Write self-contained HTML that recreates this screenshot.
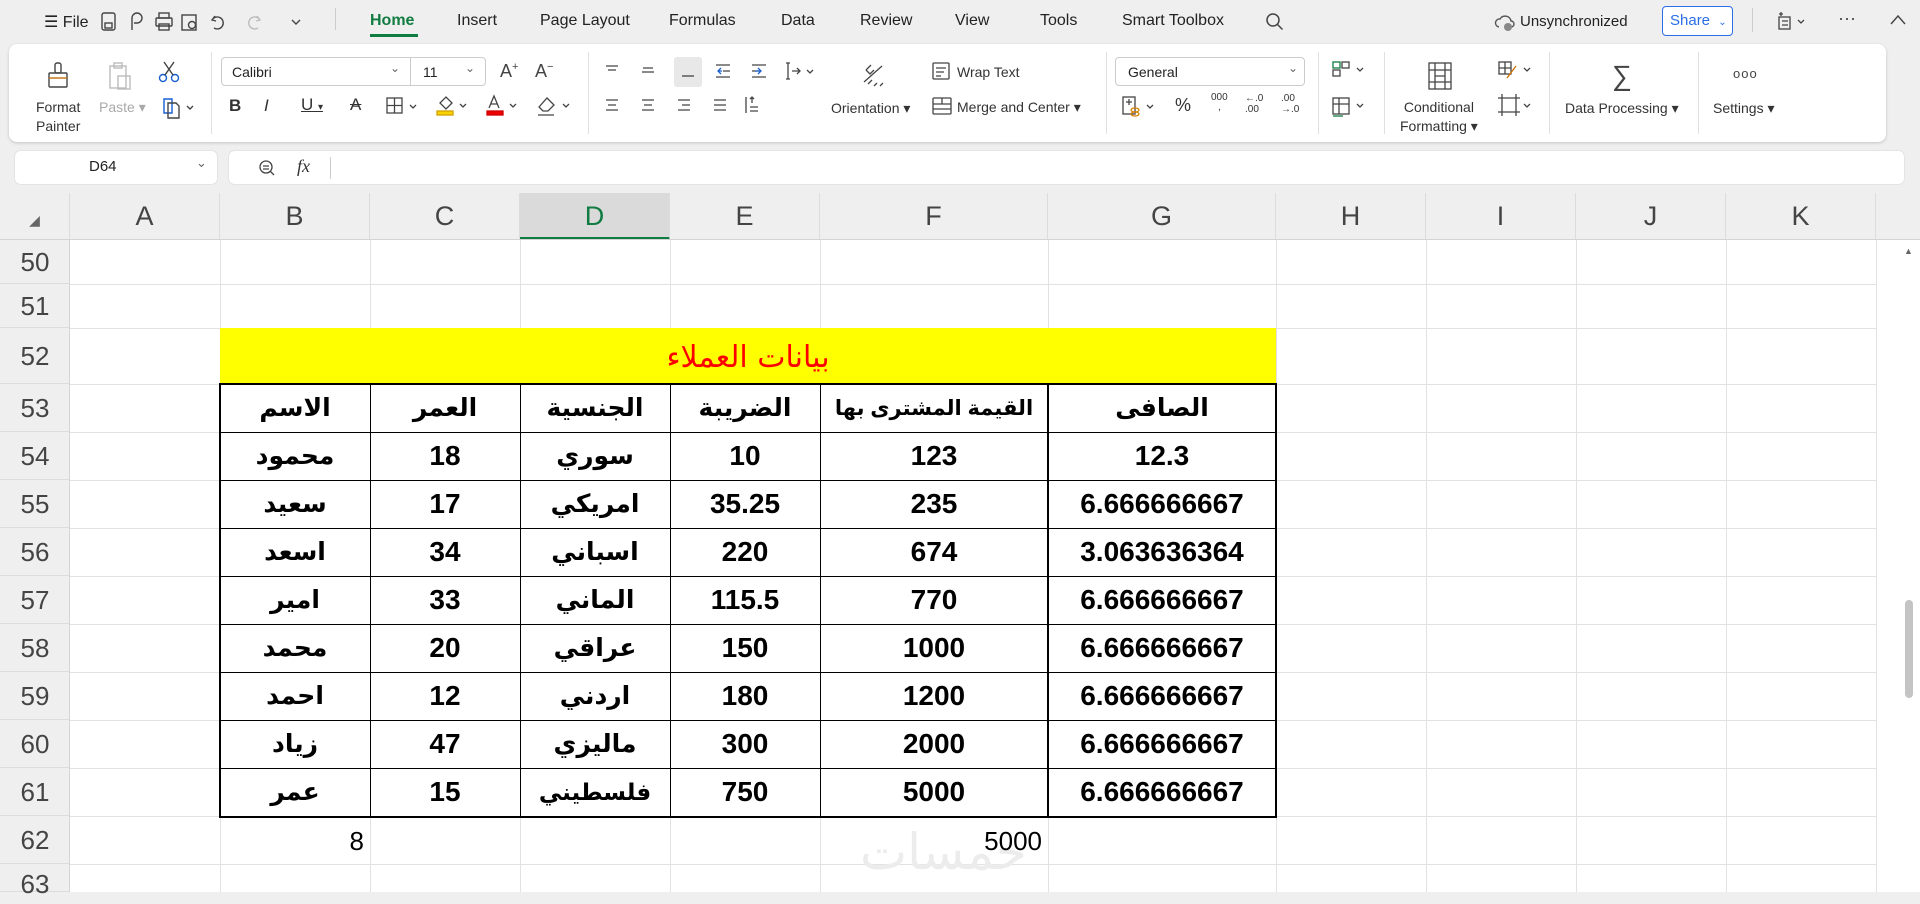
<!DOCTYPE html>
<html><head><meta charset="utf-8">
<style>
*{margin:0;padding:0;box-sizing:border-box}
body{width:1920px;height:892px;overflow:hidden;background:#efefef;font-family:"Liberation Sans","DejaVu Sans",sans-serif;position:relative;color:#222}
.a{position:absolute;white-space:nowrap}
.tab{font-size:16px;top:12px;color:#222}
.rb{font-size:14px;color:#333}
.sep{position:absolute;width:1px;background:#e0e0e0}
svg{position:absolute;overflow:visible}
.ch{position:absolute;top:193px;height:47px;border-right:1px solid #dcdcdc;font-size:27px;color:#444;text-align:center;line-height:47px;background:#efefef}
.rh{position:absolute;left:0;width:70px;border-bottom:1px solid #dcdcdc;font-size:26px;color:#444;text-align:center;background:#efefef}
.vl{position:absolute;top:240px;height:652px;width:1px;background:#e2e2e2}
.hl{position:absolute;left:70px;width:1806px;height:1px;background:#e2e2e2}
.c{position:absolute;font-weight:bold;font-size:28px;color:#000;text-align:center;display:flex;align-items:center;justify-content:center;white-space:nowrap;font-family:"Liberation Sans","DejaVu Sans",sans-serif}
.c[dir=rtl]{font-size:25px}
.tl{position:absolute;left:220px;width:1056px;height:1px;background:#000}
.tv{position:absolute;top:384px;width:1px;height:433px;background:#000}
</style></head><body>
<!-- title bar -->
<div class="a tab" style="left:44px">☰ File</div>
<svg style="left:100px;top:12px" width="200" height="20" fill="none" stroke="#444" stroke-width="1.4">
<rect x="2" y="1" width="13" height="17" rx="2"/><rect x="5" y="11" width="7" height="5"/>
<path d="M32 18v-12a5 5 0 1 1 5 5h-3"/>
<rect x="56" y="6" width="16" height="8" rx="1"/><rect x="59" y="1" width="10" height="5"/><rect x="59" y="12" width="10" height="6"/>
<rect x="82" y="3" width="14" height="15"/><circle cx="92" cy="13" r="3.5"/>
<path d="M115 4l-3 4 4 1M112 8a6 6 0 1 1 2 8"/>
<path stroke="#bbb" d="M157 4l3 4-4 1M160 8a6 6 0 1 0-2 8"/>
<path d="M192 8l4 4 4-4"/></svg>
<div class="sep" style="left:335px;top:8px;height:22px;background:#ccc"></div>
<div class="a tab" style="left:370px;font-weight:bold;color:#107c41">Home</div>
<div class="a" style="left:370px;top:34px;width:48px;height:3px;background:#107c41"></div>
<div class="a tab" style="left:457px">Insert</div>
<div class="a tab" style="left:540px">Page Layout</div>
<div class="a tab" style="left:669px">Formulas</div>
<div class="a tab" style="left:781px">Data</div>
<div class="a tab" style="left:860px">Review</div>
<div class="a tab" style="left:955px">View</div>
<div class="a tab" style="left:1040px">Tools</div>
<div class="a tab" style="left:1122px">Smart Toolbox</div>
<svg style="left:1265px;top:12px" width="20" height="20" fill="none" stroke="#444" stroke-width="1.5"><circle cx="8" cy="8" r="6"/><path d="M12.5 12.5l5 5"/></svg>
<svg style="left:1495px;top:12px" width="20" height="20" fill="none" stroke="#555" stroke-width="1.4"><path d="M4 15a4 4 0 0 1 1-8 6 6 0 0 1 11 2 3 3 0 0 1 0 6"/><circle cx="13" cy="15" r="4" fill="#888" stroke="none"/></svg>
<div class="a" style="left:1520px;top:13px;font-size:15px">Unsynchronized</div>
<div class="a" style="left:1662px;top:6px;width:71px;height:30px;border:1px solid #2a6ee8;border-radius:4px;background:#fff;color:#2a6ee8;font-size:15px;line-height:28px;padding-left:7px">Share <span style="font-size:10px;margin-left:4px">⌄</span></div>
<div class="sep" style="left:1752px;top:8px;height:24px;background:#ccc"></div>
<svg style="left:1777px;top:12px" width="30" height="20" fill="none" stroke="#444" stroke-width="1.3"><rect x="2" y="5" width="11" height="12"/><path d="M5 9h6M5 13h6M2 2h4M4 0v4M21 8l3 3 3-3"/></svg>
<div class="a" style="left:1838px;top:8px;font-size:18px;color:#444">···</div>
<svg style="left:1890px;top:14px" width="16" height="12" fill="none" stroke="#444" stroke-width="1.4"><path d="M1 10l7-8 7 8"/></svg>

<!-- ribbon -->
<div class="a" style="left:9px;top:44px;width:1877px;height:98px;background:#fff;border-radius:8px;box-shadow:0 1px 3px rgba(0,0,0,.18)"></div>
<svg style="left:46px;top:62px" width="24" height="30" fill="none" stroke="#444" stroke-width="1.4"><rect x="3" y="11" width="18" height="14" rx="1"/><path d="M3 16h18" stroke="#c67a1e"/><rect x="9" y="1" width="6" height="10" rx="2"/></svg>
<div class="a rb" style="left:36px;top:98px;text-align:center;line-height:19px">Format<br>Painter</div>
<svg style="left:108px;top:62px" width="26" height="30" fill="none" stroke="#bbb" stroke-width="1.4"><rect x="2" y="4" width="16" height="22"/><rect x="6" y="1" width="8" height="5"/><rect x="10" y="14" width="12" height="13"/></svg>
<div class="a rb" style="left:99px;top:99px;color:#aaa">Paste ▾</div>
<svg style="left:158px;top:60px" width="24" height="24" fill="none" stroke="#1a5fd0" stroke-width="1.4"><circle cx="5" cy="18" r="3.5"/><circle cx="17" cy="18" r="3.5"/><path d="M7 15L16 2M15 15L6 2" stroke="#444"/></svg>
<svg style="left:162px;top:97px" width="34" height="22" fill="none" stroke="#1a5fd0" stroke-width="1.4"><path d="M2 2h8v14H2z"/><path d="M6 6h8l3 3v12H6z" stroke="#444"/><path d="M25 9l3 3 3-3" stroke="#444"/></svg>
<div class="sep" style="left:211px;top:52px;height:82px"></div>
<div class="a" style="left:221px;top:57px;width:265px;height:29px;border:1px solid #ccc;border-radius:4px"></div>
<div class="sep" style="left:410px;top:58px;height:27px;background:#ccc"></div>
<div class="a rb" style="left:232px;top:64px;color:#222">Calibri</div>
<div class="a" style="left:390px;top:61px;font-size:12px;color:#666">⌄</div>
<div class="a rb" style="left:423px;top:64px;color:#222">11</div>
<div class="a" style="left:465px;top:61px;font-size:12px;color:#666">⌄</div>
<div class="a" style="left:500px;top:61px;font-size:18px;color:#444">A<sup style="font-size:11px">+</sup></div>
<div class="a" style="left:535px;top:61px;font-size:18px;color:#444">A<sup style="font-size:11px">−</sup></div>
<div class="a" style="left:229px;top:96px;font-size:17px;font-weight:bold;color:#333">B</div>
<div class="a" style="left:264px;top:96px;font-size:17px;font-style:italic;color:#333">I</div>
<div class="a" style="left:301px;top:95px;font-size:17px;text-decoration:underline;color:#333">U <span style="font-size:10px">▾</span></div>
<div class="a" style="left:350px;top:95px;font-size:17px;text-decoration:line-through;color:#333">A</div>
<svg style="left:386px;top:97px" width="34" height="20" fill="none" stroke="#444" stroke-width="1.3"><rect x="1" y="1" width="15" height="15"/><path d="M8.5 1v15M1 8.5h15M24 8l3 3 3-3"/></svg>
<svg style="left:436px;top:95px" width="34" height="22" fill="none" stroke="#444" stroke-width="1.3"><path d="M4 8l6-6 6 6-6 6z"/><rect x="1" y="16" width="16" height="4" fill="#f5d200" stroke="#d4a000"/><path d="M24 9l3 3 3-3"/></svg>
<svg style="left:486px;top:95px" width="34" height="22" fill="none" stroke="#444" stroke-width="1.3"><path d="M3 13l5-12 5 12M5 9h6"/><rect x="1" y="16" width="16" height="4" fill="#e00" stroke="#c00"/><path d="M24 9l3 3 3-3"/></svg>
<svg style="left:536px;top:95px" width="36" height="22" fill="none" stroke="#444" stroke-width="1.3"><path d="M3 12l8-9 7 7-6 6H7z"/><path d="M2 20h16M27 9l3 3 3-3"/></svg>
<div class="sep" style="left:588px;top:52px;height:82px"></div>
<svg style="left:604px;top:63px" width="220" height="60" fill="none" stroke="#444" stroke-width="1.3">
<path d="M2 3h12M4 7h8"/><path d="M39 5h10M38 9h12"/>
<rect x="70" y="-6" width="28" height="30" rx="3" fill="#e8e8e8" stroke="none"/><path d="M78 13h12"/>
<path d="M112 2h14M112 14h14M119 8h7" stroke="#444"/><path d="M117 5l-3 3 3 3M114 8h4" stroke="#1a5fd0"/>
<path d="M148 2h14M148 14h14M148 8h7"/><path d="M154 5l3 3-3 3M151 8h5" stroke="#1a5fd0"/>
<path d="M184 0v16M182 0h4M182 16h4M188 8h8M193 5l3 3-3 3M203 7l3 3 3-3"/>
<path d="M2 37h12M4 42h8M2 47h12"/><path d="M38 37h12M40 42h8M38 47h12"/><path d="M74 37h12M78 42h8M74 47h12"/><path d="M110 37h12M110 42h12M110 47h12"/>
<path d="M142 34v16M146 36l2-2 2 2M148 34v6M146 44h8M146 48h8"/></svg>
<svg style="left:860px;top:62px" width="30" height="30" fill="none" stroke="#444" stroke-width="1.3"><path d="M4 20L22 4M8 22l4-4M14 24l3-3M20 24l3-3M6 8l5-5M6 8l4 4 4-4"/></svg>
<div class="a rb" style="left:831px;top:100px">Orientation ▾</div>
<svg style="left:932px;top:62px" width="20" height="56" fill="none" stroke="#444" stroke-width="1.3"><rect x="1" y="1" width="16" height="16" rx="1"/><path d="M4 6h10M4 10h8M4 14h5"/><rect x="1" y="36" width="18" height="16" rx="1"/><path d="M1 42h18M10 36v6M1 47h18" /></svg>
<div class="a rb" style="left:957px;top:64px">Wrap Text</div>
<div class="a rb" style="left:957px;top:99px">Merge and Center ▾</div>
<div class="sep" style="left:1106px;top:52px;height:82px"></div>
<div class="a" style="left:1115px;top:57px;width:190px;height:29px;border:1px solid #ccc;border-radius:4px"></div>
<div class="a rb" style="left:1128px;top:64px;color:#222">General</div>
<div class="a" style="left:1288px;top:61px;font-size:12px;color:#666">⌄</div>
<svg style="left:1122px;top:96px" width="36" height="22" fill="none" stroke="#444" stroke-width="1.3"><rect x="1" y="1" width="12" height="17"/><path d="M4 6h6M7 3v6"/><ellipse cx="13" cy="14" rx="4" ry="2" stroke="#d88000"/><ellipse cx="13" cy="18" rx="4" ry="2" stroke="#d88000"/><path d="M25 9l3 3 3-3"/></svg>
<div class="a" style="left:1175px;top:95px;font-size:18px;color:#333">%</div>
<div class="a" style="left:1211px;top:93px;font-size:10px;color:#333;line-height:10px;text-align:center">000<br>,</div>
<div class="a" style="left:1245px;top:93px;font-size:10px;color:#333;line-height:11px">←.0<br>.00</div>
<div class="a" style="left:1281px;top:93px;font-size:10px;color:#333;line-height:11px">.00<br>→.0</div>
<div class="sep" style="left:1318px;top:52px;height:82px"></div>
<svg style="left:1332px;top:60px" width="34" height="60" fill="none" stroke="#444" stroke-width="1.3"><rect x="1" y="2" width="7" height="6" stroke="#107c41"/><rect x="1" y="10" width="7" height="6"/><rect x="10" y="2" width="7" height="6"/><path d="M25 8l3 3 3-3M25 44l3 3 3-3"/><rect x="1" y="38" width="16" height="16"/><path d="M1 44h16M7 38v16"/><path d="M1 56h10" stroke="#107c41"/></svg>
<div class="sep" style="left:1384px;top:52px;height:82px"></div>
<svg style="left:1428px;top:62px" width="26" height="30" fill="none" stroke="#444" stroke-width="1.3"><rect x="1" y="1" width="22" height="26"/><path d="M7 1v26M17 1v26M1 8h22M1 20h22M7 14h10"/></svg>
<div class="a rb" style="left:1400px;top:98px;line-height:19px;text-align:center">Conditional<br>Formatting ▾</div>
<svg style="left:1498px;top:60px" width="36" height="60" fill="none" stroke="#444" stroke-width="1.3"><rect x="1" y="2" width="12" height="12"/><path d="M7 2v12M1 8h12"/><path d="M9 18l9-12" stroke="#d07000"/><path d="M26 8l3 3 3-3M26 44l3 3 3-3"/><path d="M4 34v22M18 34v22M0 38h22M0 52h22"/></svg>
<div class="sep" style="left:1549px;top:52px;height:82px"></div>
<div class="a" style="left:1612px;top:60px;font-size:28px;color:#444">∑</div>
<div class="a rb" style="left:1565px;top:100px">Data Processing ▾</div>
<div class="sep" style="left:1698px;top:52px;height:82px"></div>
<div class="a" style="left:1733px;top:66px;font-size:13px;color:#444;letter-spacing:1px">ooo</div>
<div class="a rb" style="left:1713px;top:100px">Settings ▾</div>

<!-- formula bar -->
<div class="a" style="left:15px;top:151px;width:202px;height:33px;background:#fff;border-radius:5px;box-shadow:0 0 1px rgba(0,0,0,.3)"></div>
<div class="a" style="left:89px;top:158px;font-size:15px">D64</div>
<div class="a" style="left:196px;top:155px;font-size:13px;color:#666">⌄</div>
<div class="a" style="left:229px;top:151px;width:1675px;height:33px;background:#fff;border-radius:5px;box-shadow:0 0 1px rgba(0,0,0,.3)"></div>
<svg style="left:258px;top:159px" width="18" height="18" fill="none" stroke="#444" stroke-width="1.3"><circle cx="8" cy="8" r="6"/><path d="M5 7h6M5 10h6M12 12l4 4"/></svg>
<div class="a" style="left:297px;top:156px;font-size:18px;font-style:italic;font-family:'Liberation Serif',serif;color:#333">fx</div>
<div class="sep" style="left:330px;top:157px;height:22px;background:#ccc"></div>

<!-- grid -->
<div class="a" style="left:0;top:240px;width:1920px;height:652px;background:#fff"></div>
<div class="ch" style="left:0;width:70px"><span style="font-size:14px;color:#666">◢</span></div>
<div class="ch" style="left:70px;width:150px">A</div>
<div class="ch" style="left:220px;width:150px">B</div>
<div class="ch" style="left:370px;width:150px">C</div>
<div class="ch" style="left:520px;width:150px;background:#dadada;color:#107c41;border-bottom:3px solid #107c41">D</div>
<div class="ch" style="left:670px;width:150px">E</div>
<div class="ch" style="left:820px;width:228px">F</div>
<div class="ch" style="left:1048px;width:228px">G</div>
<div class="ch" style="left:1276px;width:150px">H</div>
<div class="ch" style="left:1426px;width:150px">I</div>
<div class="ch" style="left:1576px;width:150px">J</div>
<div class="ch" style="left:1726px;width:150px">K</div>
<div class="ch" style="left:1876px;width:44px;border:none"></div>
<div class="a" style="left:0;top:239px;width:1920px;height:1px;background:#d4d4d4"></div>
<div class="vl" style="left:220px"></div><div class="vl" style="left:370px"></div><div class="vl" style="left:520px"></div><div class="vl" style="left:670px"></div><div class="vl" style="left:820px"></div><div class="vl" style="left:1048px"></div><div class="vl" style="left:1276px"></div><div class="vl" style="left:1426px"></div><div class="vl" style="left:1576px"></div><div class="vl" style="left:1726px"></div><div class="vl" style="left:1876px"></div>
<div class="hl" style="top:284px"></div><div class="hl" style="top:328px"></div><div class="hl" style="top:384px"></div><div class="hl" style="top:432px"></div><div class="hl" style="top:480px"></div><div class="hl" style="top:528px"></div><div class="hl" style="top:576px"></div><div class="hl" style="top:624px"></div><div class="hl" style="top:672px"></div><div class="hl" style="top:720px"></div><div class="hl" style="top:768px"></div><div class="hl" style="top:816px"></div><div class="hl" style="top:864px"></div>
<div class="rh" style="top:240px;height:44px;line-height:44px">50</div>
<div class="rh" style="top:284px;height:44px;line-height:44px">51</div>
<div class="rh" style="top:328px;height:56px;line-height:56px">52</div>
<div class="rh" style="top:384px;height:48px;line-height:48px">53</div>
<div class="rh" style="top:432px;height:48px;line-height:48px">54</div>
<div class="rh" style="top:480px;height:48px;line-height:48px">55</div>
<div class="rh" style="top:528px;height:48px;line-height:48px">56</div>
<div class="rh" style="top:576px;height:48px;line-height:48px">57</div>
<div class="rh" style="top:624px;height:48px;line-height:48px">58</div>
<div class="rh" style="top:672px;height:48px;line-height:48px">59</div>
<div class="rh" style="top:720px;height:48px;line-height:48px">60</div>
<div class="rh" style="top:768px;height:48px;line-height:48px">61</div>
<div class="rh" style="top:816px;height:48px;line-height:48px">62</div>
<div class="rh" style="top:864px;height:28px;line-height:40px">63</div>
<div class="a" style="left:69px;top:240px;width:1px;height:652px;background:#d4d4d4"></div>

<!-- title -->
<div class="a" style="left:220px;top:328px;width:1056px;height:56px;background:#ffff00;color:#ff0000;font-size:30px;text-align:center;line-height:60px;font-family:'DejaVu Sans',sans-serif" dir="rtl">بيانات العملاء</div>
<!-- table -->
<div class="a" style="left:219px;top:383px;width:1058px;height:435px;border:2px solid #000"></div>
<div class="tv" style="left:370px"></div>
<div class="tv" style="left:520px"></div>
<div class="tv" style="left:670px"></div>
<div class="tv" style="left:820px"></div>
<div class="tv" style="left:1047px;width:2px"></div>
<div class="tl" style="top:432px"></div><div class="tl" style="top:480px"></div><div class="tl" style="top:528px"></div><div class="tl" style="top:576px"></div><div class="tl" style="top:624px"></div><div class="tl" style="top:672px"></div><div class="tl" style="top:720px"></div><div class="tl" style="top:768px"></div>

<div class="c" style="left:220px;top:384px;width:150px;height:48px" dir="rtl">الاسم</div>
<div class="c" style="left:370px;top:384px;width:150px;height:48px" dir="rtl">العمر</div>
<div class="c" style="left:520px;top:384px;width:150px;height:48px" dir="rtl">الجنسية</div>
<div class="c" style="left:670px;top:384px;width:150px;height:48px" dir="rtl">الضريبة</div>
<div class="c" style="left:820px;top:384px;width:228px;height:48px;font-size:21px;letter-spacing:-0.5px" dir="rtl">القيمة المشترى بها</div>
<div class="c" style="left:1048px;top:384px;width:228px;height:48px" dir="rtl">الصافى</div>

<div class="c" style="left:220px;top:432px;width:150px;height:48px" dir="rtl">محمود</div><div class="c" style="left:370px;top:432px;width:150px;height:48px">18</div><div class="c" style="left:520px;top:432px;width:150px;height:48px" dir="rtl">سوري</div><div class="c" style="left:670px;top:432px;width:150px;height:48px">10</div><div class="c" style="left:820px;top:432px;width:228px;height:48px">123</div><div class="c" style="left:1048px;top:432px;width:228px;height:48px">12.3</div>
<div class="c" style="left:220px;top:480px;width:150px;height:48px" dir="rtl">سعيد</div><div class="c" style="left:370px;top:480px;width:150px;height:48px">17</div><div class="c" style="left:520px;top:480px;width:150px;height:48px" dir="rtl">امريكي</div><div class="c" style="left:670px;top:480px;width:150px;height:48px">35.25</div><div class="c" style="left:820px;top:480px;width:228px;height:48px">235</div><div class="c" style="left:1048px;top:480px;width:228px;height:48px">6.666666667</div>
<div class="c" style="left:220px;top:528px;width:150px;height:48px" dir="rtl">اسعد</div><div class="c" style="left:370px;top:528px;width:150px;height:48px">34</div><div class="c" style="left:520px;top:528px;width:150px;height:48px" dir="rtl">اسباني</div><div class="c" style="left:670px;top:528px;width:150px;height:48px">220</div><div class="c" style="left:820px;top:528px;width:228px;height:48px">674</div><div class="c" style="left:1048px;top:528px;width:228px;height:48px">3.063636364</div>
<div class="c" style="left:220px;top:576px;width:150px;height:48px" dir="rtl">امير</div><div class="c" style="left:370px;top:576px;width:150px;height:48px">33</div><div class="c" style="left:520px;top:576px;width:150px;height:48px" dir="rtl">الماني</div><div class="c" style="left:670px;top:576px;width:150px;height:48px">115.5</div><div class="c" style="left:820px;top:576px;width:228px;height:48px">770</div><div class="c" style="left:1048px;top:576px;width:228px;height:48px">6.666666667</div>
<div class="c" style="left:220px;top:624px;width:150px;height:48px" dir="rtl">محمد</div><div class="c" style="left:370px;top:624px;width:150px;height:48px">20</div><div class="c" style="left:520px;top:624px;width:150px;height:48px" dir="rtl">عراقي</div><div class="c" style="left:670px;top:624px;width:150px;height:48px">150</div><div class="c" style="left:820px;top:624px;width:228px;height:48px">1000</div><div class="c" style="left:1048px;top:624px;width:228px;height:48px">6.666666667</div>
<div class="c" style="left:220px;top:672px;width:150px;height:48px" dir="rtl">احمد</div><div class="c" style="left:370px;top:672px;width:150px;height:48px">12</div><div class="c" style="left:520px;top:672px;width:150px;height:48px" dir="rtl">اردني</div><div class="c" style="left:670px;top:672px;width:150px;height:48px">180</div><div class="c" style="left:820px;top:672px;width:228px;height:48px">1200</div><div class="c" style="left:1048px;top:672px;width:228px;height:48px">6.666666667</div>
<div class="c" style="left:220px;top:720px;width:150px;height:48px" dir="rtl">زياد</div><div class="c" style="left:370px;top:720px;width:150px;height:48px">47</div><div class="c" style="left:520px;top:720px;width:150px;height:48px" dir="rtl">ماليزي</div><div class="c" style="left:670px;top:720px;width:150px;height:48px">300</div><div class="c" style="left:820px;top:720px;width:228px;height:48px">2000</div><div class="c" style="left:1048px;top:720px;width:228px;height:48px">6.666666667</div>
<div class="c" style="left:220px;top:768px;width:150px;height:48px" dir="rtl">عمر</div><div class="c" style="left:370px;top:768px;width:150px;height:48px">15</div><div class="c" style="left:520px;top:768px;width:150px;height:48px;font-size:23px" dir="rtl">فلسطيني</div><div class="c" style="left:670px;top:768px;width:150px;height:48px">750</div><div class="c" style="left:820px;top:768px;width:228px;height:48px">5000</div><div class="c" style="left:1048px;top:768px;width:228px;height:48px">6.666666667</div>

<div class="a" style="left:220px;top:816px;width:144px;height:48px;line-height:50px;text-align:right;font-size:26px;color:#000">8</div>
<div class="a" style="left:860px;top:823px;font-size:50px;color:#ececec;font-family:'DejaVu Sans',sans-serif" dir="rtl">خمسات</div>
<div class="a" style="left:820px;top:816px;width:222px;height:48px;line-height:50px;text-align:right;font-size:26px;color:#000">5000</div>

<!-- scrollbar -->
<div class="a" style="left:1904px;top:246px;font-size:9px;color:#666">▲</div>
<div class="a" style="left:1905px;top:600px;width:8px;height:98px;background:#c4c4c4;border-radius:4px"></div>
</body></html>
